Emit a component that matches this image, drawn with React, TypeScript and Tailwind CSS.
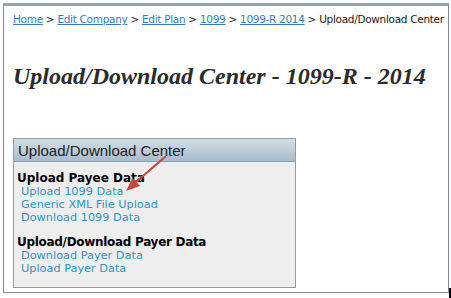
import React from 'react';

const crumbs = ['Home', 'Edit Company', 'Edit Plan', '1099', '1099-R 2014'];

function Arrow() {
  return (
    <svg className="absolute left-[118px] top-[152px]" width="52" height="42" viewBox="0 0 52 42">
      <line x1="47" y1="5" x2="18" y2="30" stroke="#c9453f" strokeWidth="2.2" strokeLinecap="round" />
      <polygon points="8,39 14.5,26 22,34" fill="#c9453f" />
    </svg>
  );
}

export default function App() {
  return (
    <div className="w-[451px] h-[298px] bg-white relative overflow-hidden" style={{ fontFamily: '"DejaVu Sans", Verdana, sans-serif' }}>
      <div className="ml-[3px] mt-[3px] w-[446px] h-[290px] border border-[#7d8ea4] border-t-[3px] border-t-[#9aa4ae] flex flex-col">
        {/* breadcrumb */}
        <div className="pl-[9px] pt-[6px] text-[10.5px] leading-[14px] text-[#222] whitespace-nowrap tracking-[-0.3px]">
          {crumbs.map((c) => (
            <span key={c}>
              <a className="text-[#3a78c0] underline">{c}</a>
              <span> &gt; </span>
            </span>
          ))}
          <span>Upload/Download Center</span>
        </div>

        <h1
          className="pl-[9px] mt-[35px] text-[24px] leading-[30px] font-bold italic text-[#2b2b2b] whitespace-nowrap"
          style={{ fontFamily: '"Liberation Serif", "Times New Roman", serif' }}
        >
          Upload/Download Center - 1099-R - 2014
        </h1>

        {/* panel */}
        <div className="ml-[9px] mt-[47px] w-[283px] h-[150px] border border-[#9a9a9a] bg-[#eeeeee] flex flex-col">
          <div
            className="h-[23px] border-b border-[#8b9cab] bg-gradient-to-b from-[#d3dee7] to-[#a9bccb] pl-[4px] text-[15px] leading-[23px] text-[#222]"
            style={{ fontFamily: '"Liberation Sans", Arial, sans-serif' }}
          >
            Upload/Download Center
          </div>
          <div className="pl-[3px] pt-[10px] text-[11.3px] leading-[13px]">
            <div className="font-bold text-[12px] text-black">Upload Payee Data</div>
            <div className="pl-[4px] text-[#2f95c9] flex flex-col">
              <a>Upload 1099 Data</a>
              <a>Generic XML File Upload</a>
              <a>Download 1099 Data</a>
            </div>
            <div className="mt-[12px] font-bold text-[12px] text-black tracking-[-0.3px]">Upload/Download Payer Data</div>
            <div className="pl-[4px] text-[#2f95c9] flex flex-col">
              <a>Download Payer Data</a>
              <a>Upload Payer Data</a>
            </div>
          </div>
        </div>
      </div>
      <Arrow />
      <div className="absolute left-[449px] top-[288px] w-[2px] h-[10px] bg-black" />
    </div>
  );
}
